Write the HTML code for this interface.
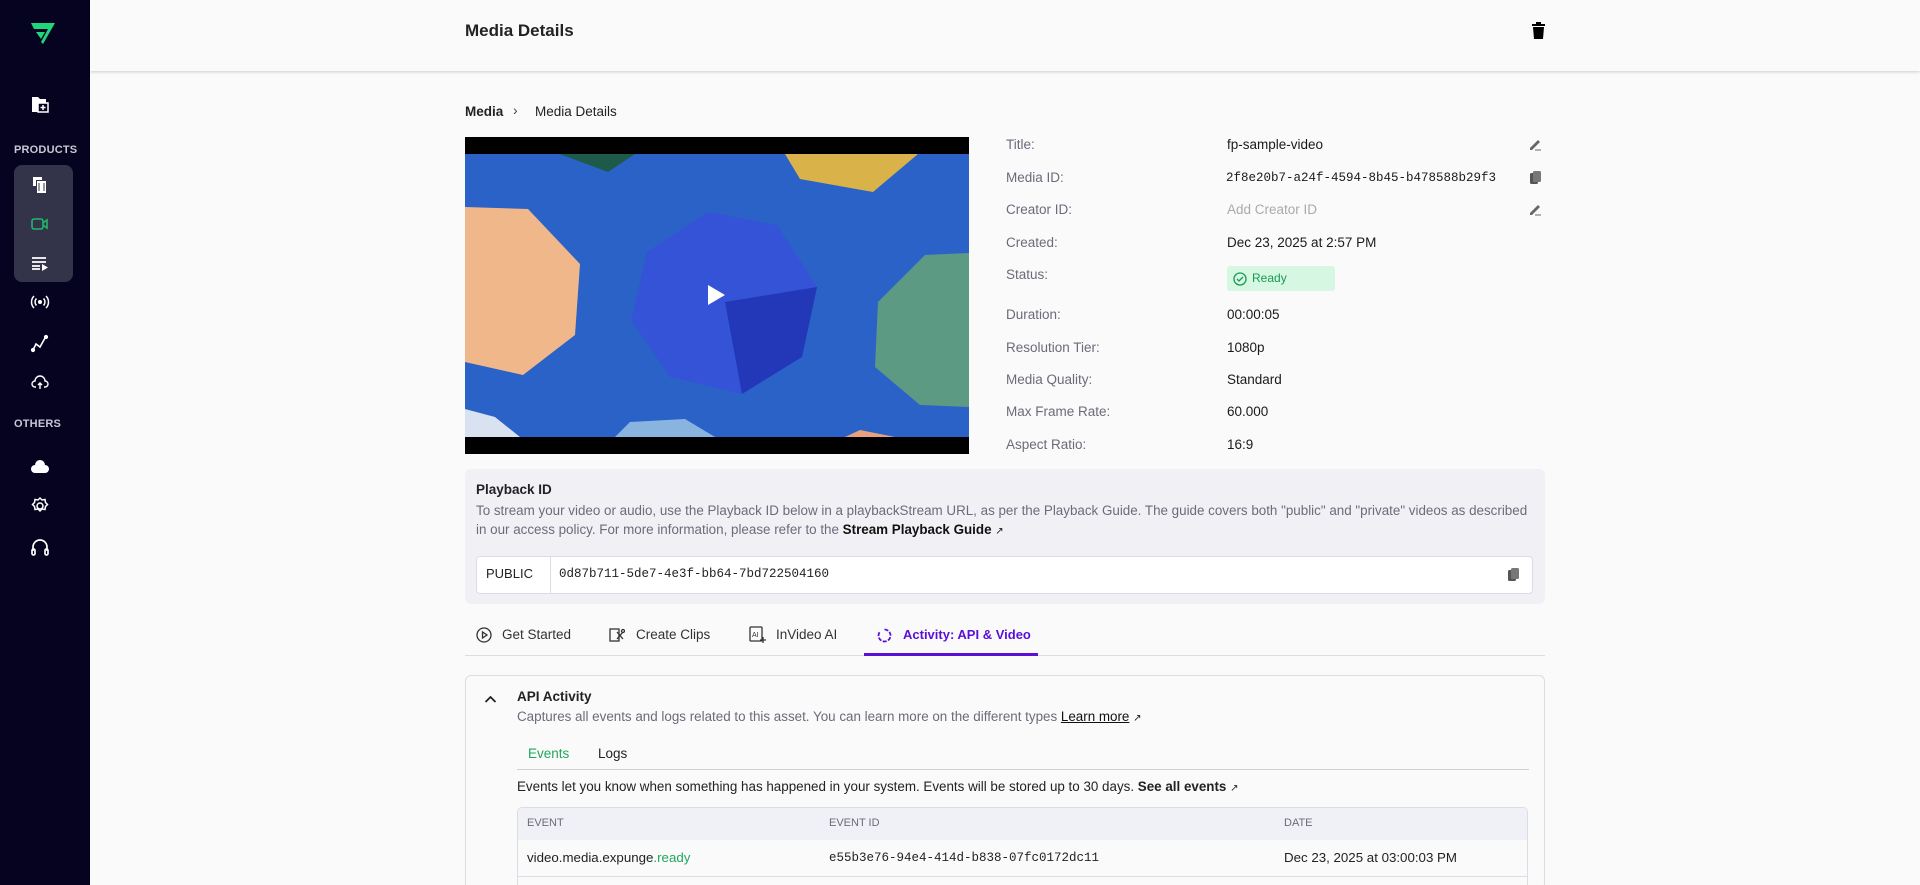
<!DOCTYPE html>
<html style="overflow:hidden;width:1920px;height:885px"><head><meta charset="utf-8"><style>
*{box-sizing:border-box;margin:0;padding:0}
body{width:1920px;height:885px;overflow:hidden;background:#fafafa;font-family:"Liberation Sans",sans-serif;color:#1a1a1a;position:relative}
.sb{position:absolute;left:0;top:0;width:90px;height:885px;background:#05031f}
.sb .lbl{position:absolute;left:14px;font-size:11px;font-weight:bold;color:#c8c8d4;letter-spacing:.2px}
.sb .ic{position:absolute;left:30px;width:20px;height:20px}
.grp{position:absolute;left:14px;top:165px;width:59px;height:117px;background:#33334a;border-radius:8px}
.hdr{position:absolute;left:90px;top:0;right:0;height:71px;background:#fafafa;box-shadow:0 1px 3px rgba(0,0,0,.18)}
.t{position:absolute;white-space:nowrap}
.lab{color:#6b6b7b;font-size:13.5px}
.val{color:#1a1a1a;font-size:13.5px}
.mono{font-family:"Liberation Mono",monospace}
</style></head><body>
<div class="sb">
<svg style="position:absolute;left:31px;top:23px" width="24" height="22" viewBox="0 0 24 22"><path d="M0 0H24L12 21 10 19 17 6H3Z" fill="#1fd67a"/><path d="M5 9H14L10 16Z" fill="#1fd67a"/></svg>
<svg class="ic" style="top:94px" viewBox="0 0 20 20"><path d="M2 3h6l2 2h6v4H8v9H2Z" fill="#fff"/><rect x="8" y="9" width="10" height="9" fill="none" stroke="#fff" stroke-width="1.5"/><path d="M13 11v5M10.5 13.5h5" stroke="#fff" stroke-width="1.5"/></svg>
<div class="lbl" style="top:144px">PRODUCTS</div>
<div class="grp"></div>
<svg class="ic" style="top:175px" viewBox="0 0 20 20"><path d="M3 2h9v3H6v6H3Z" fill="#fff"/><rect x="7" y="6" width="9" height="12" fill="#fff"/><path d="M9 8v8M14 8v8" stroke="#33334a"/></svg>
<svg class="ic" style="top:214px" viewBox="0 0 20 20"><rect x="2" y="5" width="11" height="10" rx="2" fill="none" stroke="#1fb86a" stroke-width="1.6"/><path d="M13 9l4-3v8l-4-3" fill="none" stroke="#1fb86a" stroke-width="1.6"/></svg>
<svg class="ic" style="top:253px" viewBox="0 0 20 20"><path d="M2 5h14M2 9h14M2 13h8M2 16h8" stroke="#fff" stroke-width="1.7"/><path d="M12 11l6 3.5-6 3.5Z" fill="#fff"/></svg>
<svg class="ic" style="top:292px" viewBox="0 0 20 20" fill="none" stroke="#fff" stroke-width="1.5"><circle cx="10" cy="10" r="1.3" fill="#fff"/><path d="M6.5 6.5a5 5 0 0 0 0 7M13.5 6.5a5 5 0 0 1 0 7M4 4a8.5 8.5 0 0 0 0 12M16 4a8.5 8.5 0 0 1 0 12"/></svg>
<svg class="ic" style="top:333px" viewBox="0 0 20 20" fill="none" stroke="#fff" stroke-width="1.6"><path d="M3 17l3-6 4 3 5-9"/><circle cx="3" cy="17" r="1.3" fill="#fff"/><circle cx="16" cy="4" r="1.3" fill="#fff"/></svg>
<svg class="ic" style="top:372px" viewBox="0 0 20 20" fill="none" stroke="#fff" stroke-width="1.4"><path d="M6 15H5a3 3 0 0 1 0-6 5 5 0 0 1 10 0 3 3 0 0 1 0 6h-1M10 11v6M8 13l2-2 2 2"/></svg>
<div class="lbl" style="top:418px">OTHERS</div>
<svg class="ic" style="top:457px" viewBox="0 0 20 20"><path d="M5 16a4 4 0 0 1 0-8 5 5 0 0 1 10 0 4 4 0 0 1 0 8Z" fill="#fff"/></svg>
<svg class="ic" style="top:496px" viewBox="0 0 20 20" fill="none" stroke="#fff" stroke-width="1.5"><circle cx="10" cy="10" r="3"/><path d="M10 2l2 2 3-.5.5 3 2 2-2 2-.5 3-3-.5-2 2-2-2-3 .5-.5-3-2-2 2-2 .5-3 3 .5Z"/></svg>
<svg class="ic" style="top:537px" viewBox="0 0 20 20" fill="none" stroke="#fff" stroke-width="1.7"><path d="M3 14v-4a7 7 0 0 1 14 0v4"/><rect x="2" y="12" width="3" height="6" rx="1.5"/><rect x="15" y="12" width="3" height="6" rx="1.5"/></svg>
</div>
<div class="hdr"></div>
<div class="t" style="left:465px;top:21px;font-size:17px;font-weight:bold;color:#222">Media Details</div>
<svg style="position:absolute;left:1532px;top:22px" width="13" height="17" viewBox="0 0 13 17"><rect x="0" y="2" width="13" height="2" fill="#000"/><rect x="4" y="0" width="5" height="2" fill="#000"/><path d="M1 5h11l-1 12H2Z" fill="#000"/></svg>

<div class="t" style="left:465px;top:104px;font-size:13.5px;font-weight:bold;color:#222">Media</div>
<div class="t" style="left:513px;top:102px;font-size:14px;color:#444">›</div>
<div class="t" style="left:535px;top:104px;font-size:13.5px;color:#222">Media Details</div>

<svg style="position:absolute;left:465px;top:137px" width="504" height="317" viewBox="0 0 504 317">
<rect width="504" height="317" fill="#000"/>
<rect y="17" width="504" height="283" fill="#2a62c8"/>
<polygon points="95,17 170,17 143,35" fill="#1d5a4a"/>
<polygon points="320,17 453,17 408,55 335,42" fill="#d9b24a"/>
<polygon points="0,70 63,72 115,127 110,198 58,238 0,225" fill="#f0b88a"/>
<polygon points="182,115 243,75 312,88 352,150 337,220 277,257 205,240 166,183" fill="#3553d6"/>
<polygon points="260,165 352,150 337,220 277,257" fill="#2238b8"/>
<polygon points="413,165 460,118 504,116 504,270 455,268 410,230" fill="#5d9a84"/>
<polygon points="150,300 165,285 220,282 250,300" fill="#8ab4e0"/>
<polygon points="0,272 30,280 55,300 0,300" fill="#d8e2f0"/>
<polygon points="380,300 395,293 430,300" fill="#e8a080"/>
<path d="M243 148l17 10-17 10Z" fill="#fff"/>
</svg>

<div class="t lab" style="left:1006px;top:137px">Title:</div><div class="t val" style="left:1227px;top:137px">fp-sample-video</div>
<div class="t lab" style="left:1006px;top:170px">Media ID:</div><div class="t val mono" style="left:1226px;top:171px;font-size:12.5px">2f8e20b7-a24f-4594-8b45-b478588b29f3</div>
<div class="t lab" style="left:1006px;top:202px">Creator ID:</div><div class="t val" style="left:1227px;top:202px;color:#aaa">Add Creator ID</div>
<div class="t lab" style="left:1006px;top:235px">Created:</div><div class="t val" style="left:1227px;top:235px">Dec 23, 2025 at 2:57 PM</div>
<div class="t lab" style="left:1006px;top:267px">Status:</div>
<div style="position:absolute;left:1227px;top:266px;width:108px;height:25px;background:#d6f7e2;border-radius:3px"></div>
<svg style="position:absolute;left:1233px;top:272px" width="14" height="14" viewBox="0 0 14 14" fill="none" stroke="#1a9a50" stroke-width="1.3"><circle cx="7" cy="7" r="6"/><path d="M4 7l2 2 4-4"/></svg>
<div class="t" style="left:1252px;top:271px;font-size:12px;color:#1a9a50">Ready</div>
<div class="t lab" style="left:1006px;top:307px">Duration:</div><div class="t val" style="left:1227px;top:307px">00:00:05</div>
<div class="t lab" style="left:1006px;top:340px">Resolution Tier:</div><div class="t val" style="left:1227px;top:340px">1080p</div>
<div class="t lab" style="left:1006px;top:372px">Media Quality:</div><div class="t val" style="left:1227px;top:372px">Standard</div>
<div class="t lab" style="left:1006px;top:404px">Max Frame Rate:</div><div class="t val" style="left:1227px;top:404px">60.000</div>
<div class="t lab" style="left:1006px;top:437px">Aspect Ratio:</div><div class="t val" style="left:1227px;top:437px">16:9</div>
<svg style="position:absolute;left:1529px;top:138px" width="13" height="13" viewBox="0 0 13 13"><path d="M1 10l8-8 2 2-8 8H1Z" fill="#666"/><path d="M6 12h6" stroke="#666"/></svg>
<svg style="position:absolute;left:1530px;top:171px" width="11" height="13" viewBox="0 0 11 13"><rect x="0" y="2" width="8" height="11" rx="1.5" fill="#555"/><rect x="3" y="0" width="8" height="11" rx="1.5" fill="#777"/></svg>
<svg style="position:absolute;left:1529px;top:203px" width="13" height="13" viewBox="0 0 13 13"><path d="M1 10l8-8 2 2-8 8H1Z" fill="#666"/><path d="M6 12h6" stroke="#666"/></svg>

<div style="position:absolute;left:465px;top:469px;width:1080px;height:135px;background:#f1f1f5;border-radius:6px"></div>
<div class="t" style="left:476px;top:482px;font-size:13.5px;font-weight:bold;color:#222">Playback ID</div>
<div class="t" style="left:476px;top:503px;font-size:13.4px;color:#6b6b7b">To stream your video or audio, use the Playback ID below in a playbackStream URL, as per the Playback Guide. The guide covers both "public" and "private" videos as described</div>
<div class="t" style="left:476px;top:522px;font-size:13.4px;color:#6b6b7b">in our access policy. For more information, please refer to the <b style="color:#111">Stream Playback Guide</b> <span style="font-size:10px;color:#111">↗</span></div>
<div style="position:absolute;left:476px;top:556px;width:1057px;height:38px;background:#fff;border:1px solid #dcdce2;border-radius:4px"></div>
<div style="position:absolute;left:550px;top:557px;width:1px;height:36px;background:#dcdce2"></div>
<div class="t" style="left:486px;top:566px;font-size:13px;color:#222">PUBLIC</div>
<div class="t mono" style="left:559px;top:567px;font-size:12.5px;color:#222">0d87b711-5de7-4e3f-bb64-7bd722504160</div>
<svg style="position:absolute;left:1508px;top:568px" width="11" height="13" viewBox="0 0 11 13"><rect x="0" y="2" width="8" height="11" rx="1.5" fill="#555"/><rect x="3" y="0" width="8" height="11" rx="1.5" fill="#777"/></svg>

<div style="position:absolute;left:465px;top:655px;width:1080px;height:1px;background:#dcdce2"></div>
<div style="position:absolute;left:864px;top:653px;width:174px;height:3px;background:#5b10d6"></div>
<svg style="position:absolute;left:476px;top:627px" width="16" height="16" viewBox="0 0 16 16" fill="none" stroke="#333" stroke-width="1.3"><circle cx="8" cy="8" r="7"/><path d="M6.5 5v6l4.5-3Z"/></svg>
<div class="t" style="left:502px;top:627px;font-size:13.5px;color:#333">Get Started</div>
<svg style="position:absolute;left:609px;top:626px" width="16" height="18" viewBox="0 0 16 18" fill="none" stroke="#333" stroke-width="1.3"><rect x="1" y="3" width="9" height="12"/><path d="M8 6l6 7M14 6l-6 7"/><circle cx="14" cy="5" r="1.5"/></svg>
<div class="t" style="left:636px;top:627px;font-size:13.5px;color:#333">Create Clips</div>
<svg style="position:absolute;left:749px;top:626px" width="17" height="18" viewBox="0 0 17 18" fill="none" stroke="#333" stroke-width="1.3"><rect x="1" y="1" width="12" height="14" rx="1"/><text x="3" y="11" font-size="7" fill="#333" stroke="none" font-family="Liberation Sans">AI</text><path d="M14 11v6M11 14h6"/></svg>
<div class="t" style="left:776px;top:627px;font-size:13.5px;color:#333">InVideo AI</div>
<svg style="position:absolute;left:877px;top:628px" width="15" height="15" viewBox="0 0 15 15" fill="none" stroke="#5b10d6" stroke-width="1.8"><path d="M7.5 1.5a6 6 0 1 1-5 2.7" stroke-dasharray="4 1.5"/></svg>
<div class="t" style="left:903px;top:627px;font-size:13px;color:#5b10d6;font-weight:bold">Activity: API &amp; Video</div>

<div style="position:absolute;left:465px;top:675px;width:1080px;height:215px;border:1px solid #dcdce2;border-radius:6px;background:#fafafa"></div>
<svg style="position:absolute;left:484px;top:694px" width="13" height="10" viewBox="0 0 13 10" fill="none" stroke="#222" stroke-width="1.8"><path d="M1.5 8l5-5 5 5"/></svg>
<div class="t" style="left:517px;top:689px;font-size:13.5px;color:#222;font-weight:bold">API Activity</div>
<div class="t" style="left:517px;top:709px;font-size:13.4px;color:#6b6b7b">Captures all events and logs related to this asset. You can learn more on the different types <span style="color:#111;text-decoration:underline">Learn more</span> <span style="font-size:10px;color:#111">↗</span></div>
<div class="t" style="left:528px;top:746px;font-size:13.5px;color:#1fa85c">Events</div>
<div class="t" style="left:598px;top:746px;font-size:13.5px;color:#222">Logs</div>
<div style="position:absolute;left:517px;top:769px;width:1012px;height:1px;background:#d0d0d8"></div>
<div class="t" style="left:517px;top:779px;font-size:13.4px;color:#222">Events let you know when something has happened in your system. Events will be stored up to 30 days. <b>See all events</b> <span style="font-size:10px">↗</span></div>
<div style="position:absolute;left:517px;top:807px;width:1011px;height:85px;border:1px solid #dcdce6;border-radius:5px;background:#fafafa;overflow:hidden"><div style="height:32px;background:#eff1f7"></div></div>
<div class="t" style="left:527px;top:817px;font-size:11px;color:#6b6b7b">EVENT</div>
<div class="t" style="left:829px;top:817px;font-size:11px;color:#6b6b7b">EVENT ID</div>
<div class="t" style="left:1284px;top:817px;font-size:11px;color:#6b6b7b">DATE</div>
<div class="t" style="left:527px;top:850px;font-size:13.3px;color:#222">video.media.expunge<span style="color:#1fa85c">.ready</span></div>
<div class="t mono" style="left:829px;top:851px;font-size:12.5px;color:#222">e55b3e76-94e4-414d-b838-07fc0172dc11</div>
<div class="t" style="left:1284px;top:850px;font-size:13.3px;color:#222">Dec 23, 2025 at 03:00:03 PM</div>
<div style="position:absolute;left:518px;top:876px;width:1009px;height:1px;background:#dcdce6"></div>
</body></html>
